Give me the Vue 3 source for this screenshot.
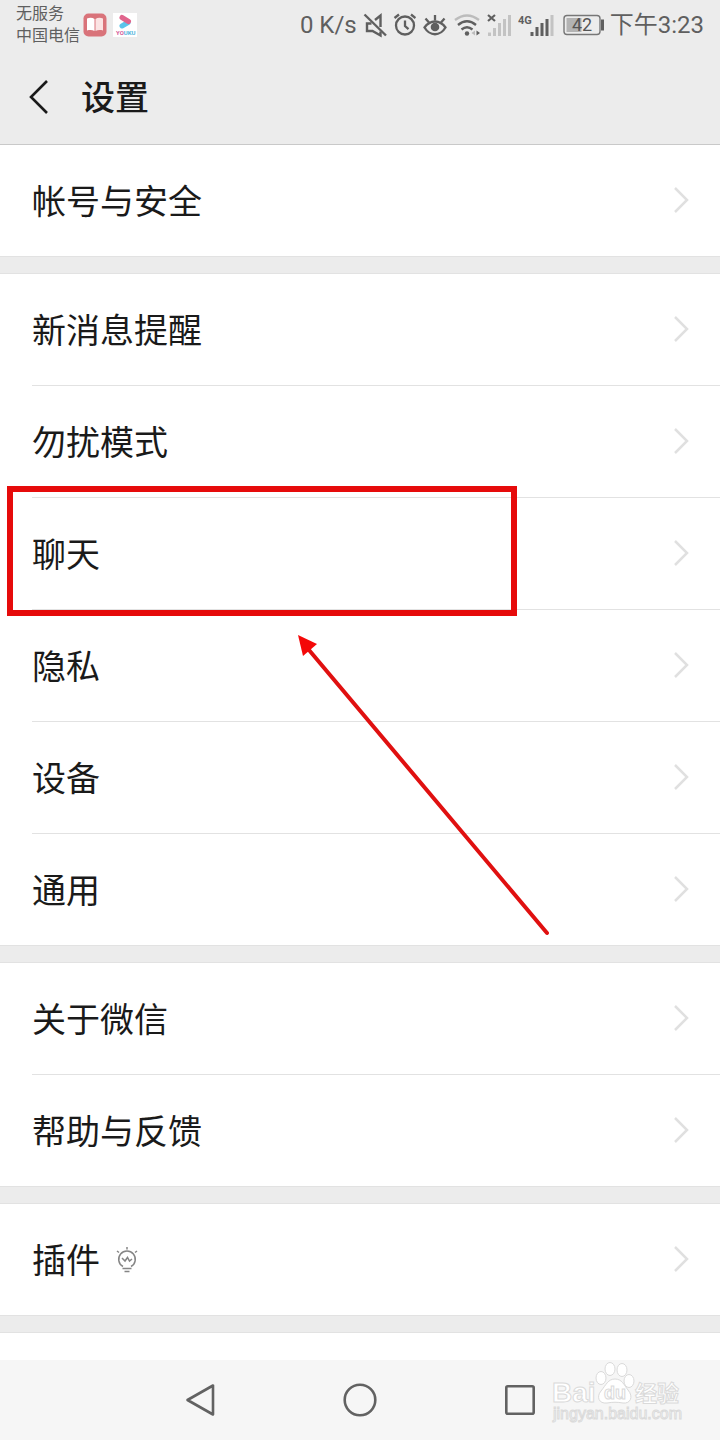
<template>
  <div class="page">
    <header class="header">
      <div class="status-bar">
        <div class="carrier">
          <span>无服务</span>
          <span>中国电信</span>
        </div>
        <svg class="app-icon" width="24" height="24" viewBox="0 0 24 24">
          <rect x="0.5" y="0.5" width="23" height="23" rx="5" fill="#d9737a" />
          <path d="M4 5.5c3-1 5.5-.8 7.5.5v12c-2-1-4.500-1.200-7.500-.5z" fill="#fff" />
          <path d="M20 5.500c-3-1-5.500-.8-7.500.5v12c2-1 4.500-1.200 7.500-.5z" fill="#fbe3e3" />
        </svg>
        <svg class="app-icon" width="24" height="24" viewBox="0 0 24 24">
          <rect width="24" height="24" fill="#fff" />
          <path d="M9 13l6-3.500" stroke="#5cc4ea" stroke-width="5" stroke-linecap="round" />
          <path d="M9 4.500l6.500 4" stroke="#e0648c" stroke-width="5" stroke-linecap="round" />
          <text x="3" y="22" class="youku" fill="#d45a98">YO<tspan fill="#4fb4dc">UKU</tspan></text>
        </svg>

        <div class="indicators">
          <span class="speed">0 K/s</span>
          <svg width="24" height="28" viewBox="0 0 24 28" fill="none" stroke="#5f5f5f" stroke-width="2.4">
            <path d="M1.500 3.500l21.500 21" />
            <path d="M12 9l5.500-4.500V16M8.500 12.500H4v7.500h5.500l8 4.500v-4" />
          </svg>
          <svg width="23" height="28" viewBox="0 0 23 28" fill="none" stroke="#5f5f5f" stroke-width="2.3">
            <circle cx="12" cy="14.5" r="9" />
            <path d="M12 9.500v5.500l3.500 3.200M1.500 7l4.500-3.500M22.500 7L18 3.500" />
          </svg>
          <svg width="25" height="28" viewBox="0 0 25 28" fill="none" stroke="#5f5f5f" stroke-width="2.3">
            <path d="M2.500 16.500C8 8.500 18 8.500 23.500 16.500C18 25.500 8 25.500 2.500 16.500z" />
            <circle cx="13" cy="16" r="4.3" fill="#5f5f5f" stroke="none" />
            <path d="M13 4v5.500M3.500 7.500l3.500 4M22.500 7.500l-3.500 4" />
          </svg>
          <svg width="27" height="28" viewBox="0 0 27 28" fill="none" stroke="#5f5f5f" stroke-width="2.3">
            <path d="M2 9Q14 0 26 9" stroke="#bcbcbc" />
            <path d="M5 14q9-7.500 18 0" />
            <path d="M8.500 18.500q5.500-4.500 11 0" />
            <circle cx="14" cy="22.5" r="2.2" fill="#5f5f5f" stroke="none" />
            <path d="M22 19.500v5l-3.500-2.500z" fill="#bcbcbc" stroke="none" />
            <path d="M23.500 19.500v5l3.500-2.500z" fill="#5f5f5f" stroke="none" />
          </svg>
          <svg width="26" height="28" viewBox="0 0 26 28" fill="none" stroke="#c3c3c3" stroke-width="3">
            <path d="M2 4l7 6M9 4l-7 6" stroke="#5f5f5f" stroke-width="2.2" />
            <path d="M3.500 25v-3.500M8.500 25v-8M13.500 25V12M18.500 25V8M23.500 25V4" />
          </svg>
          <svg width="38" height="28" viewBox="0 0 38 28" fill="none" stroke="#5f5f5f" stroke-width="3">
            <text x="0" y="13" class="network">4G</text>
            <path d="M14 25v-4M19 25v-9M24 25V12M29 25V8" />
            <path d="M34 25V4" stroke="#c3c3c3" />
          </svg>
          <svg width="42" height="28" viewBox="0 0 42 28">
            <rect x="2" y="4.5" width="36" height="19" rx="3" fill="none" stroke="#777" stroke-width="1.4" />
            <rect x="4.5" y="7" width="15" height="14" fill="#b3b3b3" />
            <path d="M40.500 8.500v11" stroke="#5f5f5f" stroke-width="3" />
            <text x="10" y="20" class="battery">42</text>
          </svg>
          <span class="time">下午3:23</span>
        </div>
      </div>

      <div class="title-bar">
        <button class="back" type="button" aria-label="返回">
          <svg width="20" height="36" viewBox="0 0 20 36">
            <path d="M18 2L2 18l16 16" fill="none" stroke="#1a1a1a" stroke-width="2.6" />
          </svg>
        </button>
        <h1>设置</h1>
      </div>
    </header>

    <main class="settings">
      <section v-for="(group, index) in groups" :key="index" class="group">
        <a v-for="item in group" :key="item.label" class="row" href="#" @click.prevent>
          <span class="content">
            <span class="label">{{ item.label }}</span>
            <svg v-if="item.bulb" class="bulb" width="24" height="28" viewBox="0 0 24 28" fill="none" stroke="#858585" stroke-width="1.5">
              <path d="M8 20.500a8.300 8.300 0 1 1 8 0" />
              <path d="M7 12l3 3 2.500-3.500 2 3.500 2.500-2" />
              <path d="M7.500 22.500h9M9.500 25.500h5M12 1v2.500M2 5l2 1.500M22 5l-2 1.500" />
            </svg>
            <svg class="chevron" width="16" height="28" viewBox="0 0 16 28">
              <path d="M2 1l12 12L2 25" fill="none" stroke="#e0e0e0" stroke-width="2.5" />
            </svg>
          </span>
          <template v-if="item.marked">
            <span class="mark"></span>
            <svg class="arrow" width="260" height="306" viewBox="0 0 260 306">
              <path d="M14 18L252 301" stroke="#e01010" stroke-width="4" stroke-linecap="round" />
              <path d="M3 3l19 9-14 12z" fill="#f40808" />
            </svg>
          </template>
        </a>
      </section>
    </main>

    <nav class="nav-bar">
      <button type="button" aria-label="后退">
        <svg width="36" height="36" viewBox="0 0 36 36">
          <path d="M31 3.500v29L5.500 18z" />
        </svg>
      </button>
      <button type="button" aria-label="主页">
        <svg width="36" height="36" viewBox="0 0 36 36">
          <circle cx="18" cy="18" r="15.3" />
        </svg>
      </button>
      <button type="button" aria-label="最近任务">
        <svg width="36" height="36" viewBox="0 0 36 36">
          <rect x="4.3" y="4.3" width="27.4" height="27.4" rx="1.5" />
        </svg>
      </button>
      <svg class="watermark" width="140" height="70" viewBox="0 0 140 70">
        <text x="4" y="42" class="wm-name">Bai</text>
        <ellipse cx="53" cy="18" rx="5" ry="6.5" />
        <ellipse cx="62" cy="9" rx="5" ry="6.5" />
        <ellipse cx="74" cy="10" rx="5" ry="6.5" />
        <ellipse cx="81" cy="21" rx="5" ry="6.5" />
        <path d="M67 19c7 0 9 6 13 11 6 7 2 14-5 13-6-1-10-1-16 0-8 1-11-6-6-12 5-6 7-12 14-12z" />
        <text x="56" y="39" class="wm-du">du</text>
        <text x="87" y="41" class="wm-cn">经验</text>
        <text x="5" y="59" class="wm-url">jingyan.baidu.com</text>
      </svg>
    </nav>
  </div>
</template>

<script setup>
const groups = [
  [{ label: '帐号与安全' }],
  [
    { label: '新消息提醒' },
    { label: '勿扰模式' },
    { label: '聊天', marked: true },
    { label: '隐私' },
    { label: '设备' },
    { label: '通用' }
  ],
  [{ label: '关于微信' }, { label: '帮助与反馈' }],
  [{ label: '插件', bulb: true }],
  []
]
</script>

<style>
body {
  margin: 0;
}
</style>

<style scoped>
.page {
  display: flex;
  flex-direction: column;
  min-height: 100vh;
  background: #ececec;
  color: #1a1a1a;
  font-family: Roboto, "Noto Sans CJK SC", sans-serif;
}

svg {
  display: block;
  flex: none;
}

button {
  padding: 0;
  border: 0;
  background: none;
  cursor: pointer;
}

.header {
  border-bottom: 1px solid #c9c9c9;
}

.status-bar {
  display: flex;
  align-items: center;
  height: 50px;
  padding: 0 16px;
  color: #5f5f5f;
}

.carrier {
  display: flex;
  flex-direction: column;
  font-size: 16px;
  line-height: 22px;
}

.app-icon {
  margin-left: 3px;
}

.app-icon + .app-icon {
  margin-left: 6px;
}

.youku {
  font-size: 6px;
  font-weight: 700;
}

.indicators {
  display: flex;
  align-items: center;
  gap: 6px;
  margin-left: auto;
  font-size: 24px;
  line-height: 28px;
  white-space: nowrap;
}

.network {
  fill: #5f5f5f;
  stroke: none;
  font-size: 11px;
  font-weight: 700;
}

.battery {
  fill: #555;
  font-size: 18px;
}

.title-bar {
  display: flex;
  align-items: center;
  gap: 32px;
  height: 94px;
  padding-left: 29px;
}

h1 {
  margin: 0;
  padding-top: 2px;
  font-size: 34px;
  font-weight: 500;
  line-height: 48px;
}

.settings {
  display: flex;
  flex: 1;
  flex-direction: column;
}

.group {
  background: #fff;
}

.group + .group {
  margin-top: 16px;
  border-top: 1px solid #e2e2e2;
}

.group:last-child {
  flex: 1;
}

.row {
  position: relative;
  display: block;
  padding-left: 32px;
  color: inherit;
  text-decoration: none;
}

.row:last-child {
  padding-left: 0;
}

.row:last-child .content {
  padding-left: 32px;
}

.content {
  display: flex;
  align-items: center;
  height: 111px;
  padding-right: 31px;
  border-bottom: 1px solid #e2e2e2;
}

.label {
  padding-top: 2px;
  font-size: 34px;
  line-height: 48px;
}

.bulb {
  margin-left: 15px;
}

.chevron {
  margin-left: auto;
}

.mark {
  position: absolute;
  z-index: 1;
  top: -12px;
  left: 7px;
  box-sizing: border-box;
  width: 510px;
  height: 130px;
  border: 6px solid #e60b0b;
}

.arrow {
  position: absolute;
  z-index: 1;
  top: 134px;
  left: 295px;
  pointer-events: none;
}

.nav-bar {
  position: relative;
  display: flex;
  align-items: center;
  justify-content: center;
  gap: 124px;
  height: 80px;
  background: #f6f6f6;
}

.nav-bar button svg {
  fill: none;
  stroke: #626262;
  stroke-width: 2.6px;
  stroke-linejoin: round;
}

.watermark {
  position: absolute;
  top: 0;
  right: 32px;
  fill: #fff;
  stroke: #dadada;
  stroke-width: 1px;
  font-family: "Liberation Sans", "Noto Sans CJK SC", sans-serif;
}

.wm-name {
  font-size: 28px;
  font-weight: 700;
}

.wm-du {
  font-size: 18px;
  font-weight: 700;
}

.wm-cn {
  font-size: 22px;
  font-weight: 700;
}

.wm-url {
  font-size: 16px;
}
</style>
